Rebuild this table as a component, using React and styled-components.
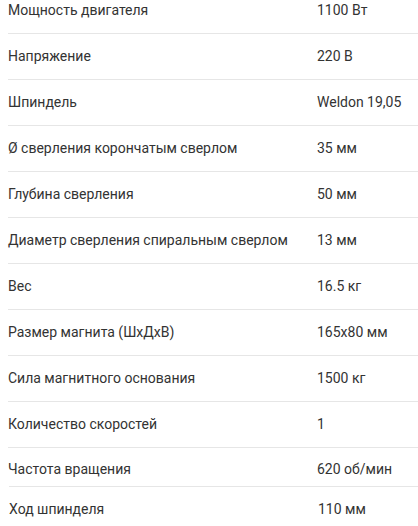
import styled, { createGlobalStyle } from "styled-components";

const GlobalStyle = createGlobalStyle`
  html, body {
    margin: 0;
    padding: 0;
    background: #fff;
    overflow: hidden;
  }
  body {
    font-family: Roboto, "Noto Sans", Arial, sans-serif;
  }
`;

const specs = [
  ["Мощность двигателя", "1100 Вт"],
  ["Напряжение", "220 В"],
  ["Шпиндель", "Weldon 19,05"],
  ["Ø сверления корончатым сверлом", "35 мм"],
  ["Глубина сверления", "50 мм"],
  ["Диаметр сверления спиральным сверлом", "13 мм"],
  ["Вес", "16.5 кг"],
  ["Размер магнита (ШхДхВ)", "165х80 мм"],
  ["Сила магнитного основания", "1500 кг"],
  ["Количество скоростей", "1"],
  ["Частота вращения", "620 об/мин"],
  ["Ход шпинделя", "110 мм"],
];

export default function App() {
  return (
    <>
      <GlobalStyle />
      <SpecTable>
        {specs.map(([name, value], i) => (
          <SpecRow
            key={name}
            $short={i === specs.length - 2}
            $last={i === specs.length - 1}
          >
            <Name>{name}</Name>
            <Value>{value}</Value>
          </SpecRow>
        ))}
      </SpecTable>
    </>
  );
}

const SpecTable = styled.div`
  display: flex;
  flex-direction: column;
  margin-top: -12px;
  padding-left: 8px;
  color: #333;
  font-size: 14px;
  line-height: 20px;
`;

const SpecRow = styled.div`
  display: grid;
  grid-template-columns: 309px 1fr;
  padding: ${(p) => (p.$short ? "11px 0 7px" : "12px 0 13px")};
  border-bottom: 1px solid ${(p) => (p.$short || p.$last ? "transparent" : "#e6e6e6")};
  border-top: ${(p) => (p.$last ? "1px solid #e6e6e6" : "none")};
  margin-left: ${(p) => (p.$last ? "1px" : "0")};
  margin-top: ${(p) => (p.$last ? "-1px" : "0")};
`;

const Name = styled.span`
  white-space: nowrap;
`;

const Value = styled.span`
  white-space: nowrap;
`;
